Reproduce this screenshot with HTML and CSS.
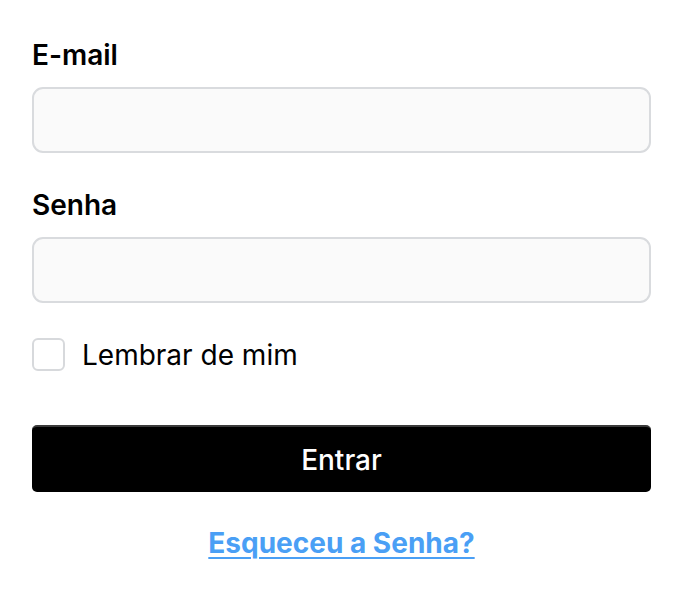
FILE: index.html
```html
<!DOCTYPE html>
<html>
<head>
    <meta charset="UTF-8" />
    <title>Login</title>
    <link rel="stylesheet" href="styles.css">
</head>
<body>
    <form class="login" action="#">
        <div class="field">
            <label class="label" for="email">E-mail</label>
            <input class="input" type="email" id="email">
        </div>
        <div class="field">
            <label class="label" for="senha">Senha</label>
            <input class="input" type="password" id="senha">
        </div>
        <label class="remember">
            <input type="checkbox" class="check">
            <span>Lembrar de mim</span>
        </label>
        <button class="btn" type="submit">Entrar</button>
        <div class="forgot">
            <a href="#">Esqueceu a Senha?</a>
        </div>
    </form>
</body>
</html>
```

FILE: styles.css
```css
* {
    margin: 0;
    padding: 0;
    box-sizing: border-box;
}
body {
    background-color: #fff;
    font-family: Inter, "Liberation Sans", sans-serif;
    color: #000;
}
.login {
    padding: 38px 33px 0 32px;
    display: flex;
    flex-direction: column;
}

.field {
    display: flex;
    flex-direction: column;
    margin-bottom: 35px;
}

.label {
    font-size: 28px;
    font-weight: 600;
    line-height: 34px;
    margin-bottom: 15px;
}

.input {
    height: 66px;
    border: 2px solid #d9dbde;
    border-radius: 11px;
    background-color: #fafafa;
    font-size: 28px;
    padding: 0 16px;
    outline: none;
}

.remember {
    display: flex;
    align-items: center;
    gap: 17px;
    font-size: 28px;
    height: 33px;
    margin-bottom: 54px;
}

.check {
    appearance: none;
    width: 33px;
    height: 33px;
    border: 2px solid #d7d9dc;
    border-radius: 6px;
    background-color: #fff;
}

.btn {
    height: 67px;
    background-color: #000;
    color: #fff;
    border: none;
    border-top: 2px solid #3a3a3a;       /* borda de cima um pouco mais clara */
    border-radius: 5px;
    font-family: inherit;
    font-size: 28px;
    font-weight: 500;
    margin-bottom: 34px;
}

.forgot {
    text-align: center;
    line-height: 34px;
}

.forgot a {
    color: #4a9ff5;
    font-size: 28px;
    font-weight: 700;
    text-decoration: underline;
    text-decoration-thickness: 2px;
    text-underline-offset: 4px;
}
```
